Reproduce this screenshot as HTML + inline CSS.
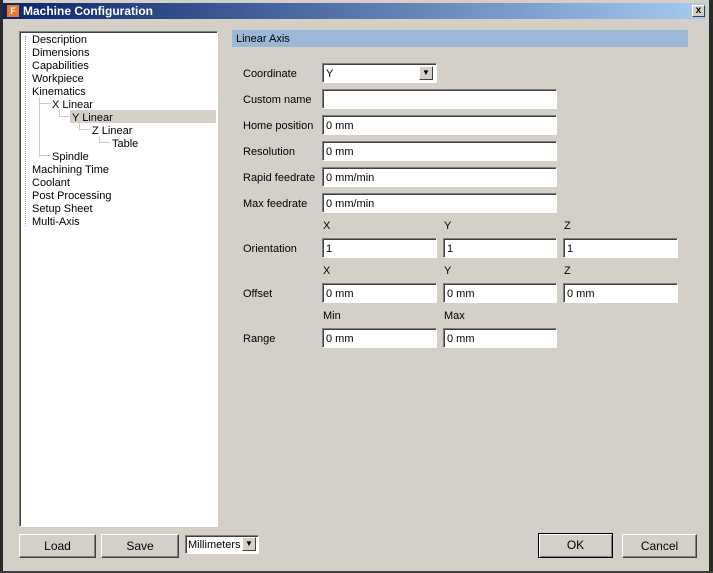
<!DOCTYPE html><html><head><style>
body{margin:0;width:713px;height:573px;background:#d4d0c8;font-family:"Liberation Sans",sans-serif;font-size:11px;color:#000;position:relative;overflow:hidden}
.a{position:absolute}
.title{left:3px;top:3px;width:703px;height:16px;background:linear-gradient(90deg,#0a246a,#a6caf0);color:#fff;font-weight:bold;font-size:12px;line-height:16px}
.inp{position:absolute;background:#fff;border-top:1px solid #808080;border-left:1px solid #808080;border-right:1px solid #fff;border-bottom:1px solid #fff;box-shadow:inset 1px 1px 0 #404040;line-height:20px;padding-left:3px;box-sizing:border-box;height:20px}
.lbl{position:absolute;left:243px}
.btn{position:absolute;border:1px solid;border-color:#fff #404040 #404040 #fff;box-shadow:inset -1px -1px 0 #808080;text-align:center;line-height:23px;height:24px;box-sizing:border-box;font-size:12px}
.t{position:absolute;white-space:nowrap}
.dd{position:absolute;width:14px;height:14px;background:#d4d0c8;border:1px solid;border-color:#fff #404040 #404040 #fff;box-sizing:border-box;font-size:8px;text-align:center;line-height:12px}
</style></head><body>
<div class="a" style="left:0;top:0;width:3px;height:573px;background:#2a2a2a"></div>
<div class="a" style="right:0;top:0;width:4px;height:573px;background:#2a2a2a"></div>
<div class="a" style="left:0;bottom:0;width:713px;height:2px;background:#404040"></div>
<div class="a title"><span style="display:inline-block;width:12px;height:12px;background:#e87a2a;margin:2px 4px 0 4px;vertical-align:top;color:#fff;font-size:9px;line-height:12px;text-align:center">F</span>Machine Configuration</div>
<div class="a" style="left:692px;top:5px;width:13px;height:12px;background:#d4d0c8;border:1px solid;border-color:#fff #404040 #404040 #fff;box-sizing:border-box;font-size:10px;font-weight:bold;line-height:10px;text-align:center">x</div>
<div class="a" style="left:19px;top:31px;width:199px;height:496px;background:#fff;border:1px solid;border-color:#808080 #fff #fff #808080;box-sizing:border-box;box-shadow:inset 1px 1px 0 #404040"></div>
<div class="a" style="left:70px;top:110px;width:146px;height:13px;background:#d4d0c8"></div>
<div class="a" style="left:25px;top:36px;height:190px;border-left:1px dotted #999"></div>
<div class="a" style="left:39px;top:97px;width:1px;height:60px;background:#ccc"></div>
<div class="a" style="left:39px;top:103px;width:12px;height:1px;background:#ccc"></div>
<div class="a" style="left:39px;top:155px;width:12px;height:1px;background:#ccc"></div>
<div class="a" style="left:59px;top:110px;width:1px;height:7px;background:#ccc"></div>
<div class="a" style="left:59px;top:116px;width:11px;height:1px;background:#ccc"></div>
<div class="a" style="left:79px;top:123px;width:1px;height:7px;background:#ccc"></div>
<div class="a" style="left:79px;top:129px;width:11px;height:1px;background:#ccc"></div>
<div class="a" style="left:99px;top:136px;width:1px;height:7px;background:#ccc"></div>
<div class="a" style="left:99px;top:142px;width:11px;height:1px;background:#ccc"></div>
<div class="t" style="left:32px;top:34px">Description</div>
<div class="t" style="left:32px;top:47px">Dimensions</div>
<div class="t" style="left:32px;top:60px">Capabilities</div>
<div class="t" style="left:32px;top:73px">Workpiece</div>
<div class="t" style="left:32px;top:86px">Kinematics</div>
<div class="t" style="left:52px;top:99px">X Linear</div>
<div class="t" style="left:72px;top:112px">Y Linear</div>
<div class="t" style="left:92px;top:125px">Z Linear</div>
<div class="t" style="left:112px;top:138px">Table</div>
<div class="t" style="left:52px;top:151px">Spindle</div>
<div class="t" style="left:32px;top:164px">Machining Time</div>
<div class="t" style="left:32px;top:177px">Coolant</div>
<div class="t" style="left:32px;top:190px">Post Processing</div>
<div class="t" style="left:32px;top:203px">Setup Sheet</div>
<div class="t" style="left:32px;top:216px">Multi-Axis</div>

<div class="a" style="left:232px;top:30px;width:456px;height:17px;background:#9bb9d6;line-height:18px;padding-left:4px;box-sizing:border-box">Linear Axis</div>

<div class="lbl" style="top:68px">Coordinate</div>
<div class="inp" style="left:322px;top:63px;width:115px;height:20px">Y</div>
<div class="dd" style="left:419px;top:66px">▼</div>
<div class="lbl" style="top:94px">Custom name</div><div class="inp" style="left:322px;top:89px;width:235px"></div>
<div class="lbl" style="top:120px">Home position</div><div class="inp" style="left:322px;top:115px;width:235px">0 mm</div>
<div class="lbl" style="top:146px">Resolution</div><div class="inp" style="left:322px;top:141px;width:235px">0 mm</div>
<div class="lbl" style="top:172px">Rapid feedrate</div><div class="inp" style="left:322px;top:167px;width:235px">0 mm/min</div>
<div class="lbl" style="top:198px">Max feedrate</div><div class="inp" style="left:322px;top:193px;width:235px">0 mm/min</div>

<div class="t" style="left:323px;top:220px">X</div><div class="t" style="left:444px;top:220px">Y</div><div class="t" style="left:564px;top:220px">Z</div>
<div class="lbl" style="top:243px">Orientation</div>
<div class="inp" style="left:322px;top:238px;width:115px">1</div><div class="inp" style="left:443px;top:238px;width:114px">1</div><div class="inp" style="left:563px;top:238px;width:115px">1</div>
<div class="t" style="left:323px;top:265px">X</div><div class="t" style="left:444px;top:265px">Y</div><div class="t" style="left:564px;top:265px">Z</div>
<div class="lbl" style="top:288px">Offset</div>
<div class="inp" style="left:322px;top:283px;width:115px">0 mm</div><div class="inp" style="left:443px;top:283px;width:114px">0 mm</div><div class="inp" style="left:563px;top:283px;width:115px">0 mm</div>
<div class="t" style="left:323px;top:310px">Min</div><div class="t" style="left:444px;top:310px">Max</div>
<div class="lbl" style="top:333px">Range</div>
<div class="inp" style="left:322px;top:328px;width:115px">0 mm</div><div class="inp" style="left:443px;top:328px;width:114px">0 mm</div>

<div class="btn" style="left:19px;top:534px;width:77px">Load</div>
<div class="btn" style="left:101px;top:534px;width:78px">Save</div>
<div class="inp" style="left:185px;top:535px;width:74px;height:19px;line-height:19px;padding-left:2px">Millimeters</div>
<div class="dd" style="left:242px;top:537px">▼</div>
<div class="btn" style="left:538px;top:533px;width:75px;height:25px;border:1px solid #000;box-shadow:inset 1px 1px 0 #fff,inset -1px -1px 0 #808080">OK</div>
<div class="btn" style="left:622px;top:534px;width:75px">Cancel</div>
</body></html>
